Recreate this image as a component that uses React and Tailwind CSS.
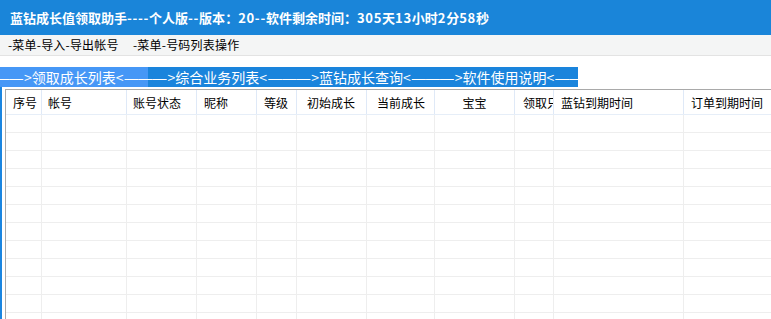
import React from 'react';

// column layout of the list grid (widths measured from the window)
const columns = [
  { title: '序号', w: 'w-[36px]', pad: 'pl-[7px]' },
  { title: '帐号', w: 'w-[85px]', pad: 'pl-[6px]' },
  { title: '账号状态', w: 'w-[70px]', pad: 'pl-[6px]' },
  { title: '昵称', w: 'w-[60px]', pad: 'pl-[7px]' },
  { title: '等级', w: 'w-[40px]', pad: 'pl-[7px]' },
  { title: '初始成长', w: 'w-[70px]', pad: 'pl-[10px]' },
  { title: '当前成长', w: 'w-[68px]', pad: 'pl-[10px]' },
  { title: '宝宝', w: 'w-[80px]', pad: 'justify-center' },
  { title: '领取只数', w: 'w-[39px]', pad: 'pl-[8px]' },
  { title: '蓝钻到期时间', w: 'w-[130px]', pad: 'pl-[7px]' },
  { title: '订单到期时间', w: 'w-[120px]', pad: 'pl-[7px]' },
];

const tabs = ['领取成长列表', '综合业务列表', '蓝钻成长查询', '软件使用说明'];

const rows = Array.from({ length: 12 }, (_, i) => i);

// dash runs between the tab captions
function Dashes({ n }) {
  return (
    <span className="mx-[1px]" style={{ fontFamily: '"Liberation Sans", sans-serif' }}>
      {'—'.repeat(n)}
    </span>
  );
}

// full-width colon, kept at its full width
const Colon = () => <span className="inline-block w-[13px] text-center">：</span>;
// ascii runs in the title are a bit wider in the original font
const A = ({ children }) => <span className="tracking-[0.7px]">{children}</span>;

export default function App() {
  return (
    <div
      className="w-[771px] h-[319px] overflow-hidden bg-white flex flex-col text-black"
      style={{ fontFamily: '"Noto Sans CJK SC", "Noto Sans", sans-serif' }}
    >
      {/* Title bar */}
      <div className="h-[35px] shrink-0 bg-[#1a85d9] flex items-center pl-[10px] text-white text-[13px] font-bold whitespace-nowrap">
        蓝钻成长值领取助手<A>----</A>个人版<A>--</A>版本<Colon /><A>20--</A>软件剩余时间<Colon />
        <A>305</A>天<A>13</A>小时<A>2</A>分<A>58</A>秒
      </div>

      {/* Menu bar */}
      <div className="h-[21px] shrink-0 bg-[#f4f5f5] border-b border-[#e3e3e3] flex items-center text-[12px] whitespace-nowrap">
        <span className="pl-[8px] w-[133px] tracking-[0.2px]">-菜单-导入-导出帐号</span>
        <span className="tracking-[0.2px]">-菜单-号码列表操作</span>
      </div>

      <div className="h-[11px] shrink-0" />

      {/* Tab strip */}
      <div className="h-[20px] shrink-0 w-[578px] overflow-hidden bg-[linear-gradient(to_right,#4697f6_148px,#1a84dc_148px)] text-white text-[14px] leading-[20px] whitespace-nowrap">
        <span className="inline-block -ml-[6px]">
          {tabs.map((t, i) => (
            <React.Fragment key={t}>
              <Dashes n={i === 0 ? 2 : 3} />
              &gt;{t}&lt;
            </React.Fragment>
          ))}
          <Dashes n={2} />
        </span>
      </div>

      {/* Grid area */}
      <div className="flex-1 flex min-h-0">
        <div className="w-[2px] shrink-0 bg-[#1a85e0]" />
        <div className="w-[3px] shrink-0" />
        <div className="flex-1 pt-[2px] min-w-0 flex flex-col">
          <div className="flex-1 border-l border-t border-[#a9a9a9] overflow-hidden">
            {/* header */}
            <div className="flex h-[25px] border-b border-[#e6eef8] text-[12px] whitespace-nowrap">
              {columns.map((c) => (
                <div
                  key={c.title}
                  className={`${c.w} shrink-0 flex items-center overflow-hidden border-r border-[#dfe9f7] ${c.pad}`}
                >
                  <span className="pt-[1px]">{c.title}</span>
                </div>
              ))}
            </div>
            {/* empty rows */}
            {rows.map((r) => (
              <div key={r} className="flex h-[18px] border-b border-[#eeeeee]">
                {columns.map((c) => (
                  <div key={c.title} className={`${c.w} shrink-0 border-r border-[#eeeeee]`} />
                ))}
              </div>
            ))}
          </div>
        </div>
      </div>
    </div>
  );
}
